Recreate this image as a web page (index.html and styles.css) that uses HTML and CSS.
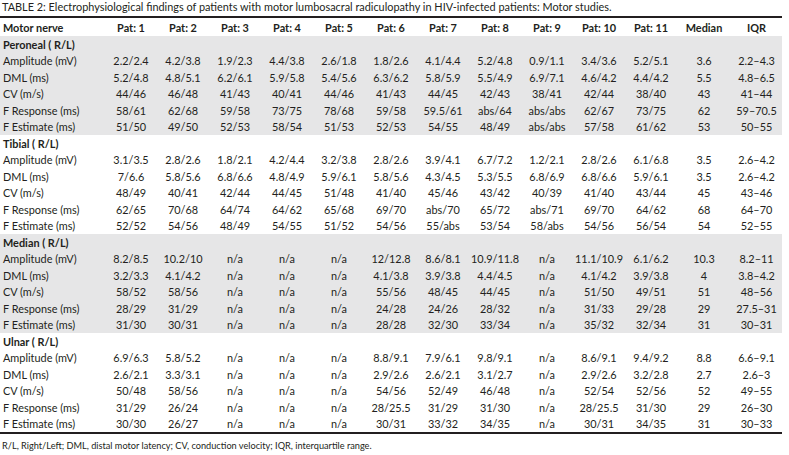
FILE: index.html
```html
<!DOCTYPE html>
<html>
<head>
<meta charset="utf-8">
<link rel="stylesheet" href="styles.css">
</head>
<body>
<div class="caption">TABLE 2: Electrophysiological findings of patients with motor lumbosacral radiculopathy in HIV-infected patients: Motor studies.</div>
<table class="data">
<colgroup>
<col class="c-name"><col class="c-pat"><col class="c-pat"><col class="c-pat"><col class="c-pat"><col class="c-pat"><col class="c-pat"><col class="c-pat"><col class="c-pat"><col class="c-pat"><col class="c-pat"><col class="c-pat"><col class="c-med"><col class="c-iqr">
</colgroup>
<thead>
<tr><th class="name">Motor nerve</th><th>Pat: 1</th><th>Pat: 2</th><th>Pat: 3</th><th>Pat: 4</th><th>Pat: 5</th><th>Pat: 6</th><th>Pat: 7</th><th>Pat: 8</th><th>Pat: 9</th><th>Pat: 10</th><th>Pat: 11</th><th>Median</th><th>IQR</th></tr>
</thead>
<tbody class="shade">
<tr><td class="sec" colspan="14">Peroneal ( R/L)</td></tr>
<tr><td class="name">Amplitude (mV)</td><td>2.2/2.4</td><td>4.2/3.8</td><td>1.9/2.3</td><td>4.4/3.8</td><td>2.6/1.8</td><td>1.8/2.6</td><td>4.1/4.4</td><td>5.2/4.8</td><td>0.9/1.1</td><td>3.4/3.6</td><td>5.2/5.1</td><td>3.6</td><td>2.2–4.3</td></tr>
<tr><td class="name">DML (ms)</td><td>5.2/4.8</td><td>4.8/5.1</td><td>6.2/6.1</td><td>5.9/5.8</td><td>5.4/5.6</td><td>6.3/6.2</td><td>5.8/5.9</td><td>5.5/4.9</td><td>6.9/7.1</td><td>4.6/4.2</td><td>4.4/4.2</td><td>5.5</td><td>4.8–6.5</td></tr>
<tr><td class="name">CV (m/s)</td><td>44/46</td><td>46/48</td><td>41/43</td><td>40/41</td><td>44/46</td><td>41/43</td><td>44/45</td><td>42/43</td><td>38/41</td><td>42/44</td><td>38/40</td><td>43</td><td>41–44</td></tr>
<tr><td class="name">F Response (ms)</td><td>58/61</td><td>62/68</td><td>59/58</td><td>73/75</td><td>78/68</td><td>59/58</td><td>59.5/61</td><td>abs/64</td><td>abs/abs</td><td>62/67</td><td>73/75</td><td>62</td><td>59–70.5</td></tr>
<tr><td class="name">F Estimate (ms)</td><td>51/50</td><td>49/50</td><td>52/53</td><td>58/54</td><td>51/53</td><td>52/53</td><td>54/55</td><td>48/49</td><td>abs/abs</td><td>57/58</td><td>61/62</td><td>53</td><td>50–55</td></tr>
</tbody>
<tbody>
<tr><td class="sec" colspan="14">Tibial ( R/L)</td></tr>
<tr><td class="name">Amplitude (mV)</td><td>3.1/3.5</td><td>2.8/2.6</td><td>1.8/2.1</td><td>4.2/4.4</td><td>3.2/3.8</td><td>2.8/2.6</td><td>3.9/4.1</td><td>6.7/7.2</td><td>1.2/2.1</td><td>2.8/2.6</td><td>6.1/6.8</td><td>3.5</td><td>2.6–4.2</td></tr>
<tr><td class="name">DML (ms)</td><td>7/6.6</td><td>5.8/5.6</td><td>6.8/6.6</td><td>4.8/4.9</td><td>5.9/6.1</td><td>5.8/5.6</td><td>4.3/4.5</td><td>5.3/5.5</td><td>6.8/6.9</td><td>6.8/6.6</td><td>5.9/6.1</td><td>3.5</td><td>2.6–4.2</td></tr>
<tr><td class="name">CV (m/s)</td><td>48/49</td><td>40/41</td><td>42/44</td><td>44/45</td><td>51/48</td><td>41/40</td><td>45/46</td><td>43/42</td><td>40/39</td><td>41/40</td><td>43/44</td><td>45</td><td>43–46</td></tr>
<tr><td class="name">F Response (ms)</td><td>62/65</td><td>70/68</td><td>64/74</td><td>64/62</td><td>65/68</td><td>69/70</td><td>abs/70</td><td>65/72</td><td>abs/71</td><td>69/70</td><td>64/62</td><td>68</td><td>64–70</td></tr>
<tr><td class="name">F Estimate (ms)</td><td>52/52</td><td>54/56</td><td>48/49</td><td>54/55</td><td>51/52</td><td>54/56</td><td>55/abs</td><td>53/54</td><td>58/abs</td><td>54/56</td><td>56/54</td><td>54</td><td>52–55</td></tr>
</tbody>
<tbody class="shade">
<tr><td class="sec" colspan="14">Median ( R/L)</td></tr>
<tr><td class="name">Amplitude (mV)</td><td>8.2/8.5</td><td>10.2/10</td><td>n/a</td><td>n/a</td><td>n/a</td><td>12/12.8</td><td>8.6/8.1</td><td>10.9/11.8</td><td>n/a</td><td>11.1/10.9</td><td>6.1/6.2</td><td>10.3</td><td>8.2–11</td></tr>
<tr><td class="name">DML (ms)</td><td>3.2/3.3</td><td>4.1/4.2</td><td>n/a</td><td>n/a</td><td>n/a</td><td>4.1/3.8</td><td>3.9/3.8</td><td>4.4/4.5</td><td>n/a</td><td>4.1/4.2</td><td>3.9/3.8</td><td>4</td><td>3.8–4.2</td></tr>
<tr><td class="name">CV (m/s)</td><td>58/52</td><td>58/56</td><td>n/a</td><td>n/a</td><td>n/a</td><td>55/56</td><td>48/45</td><td>44/45</td><td>n/a</td><td>51/50</td><td>49/51</td><td>51</td><td>48–56</td></tr>
<tr><td class="name">F Response (ms)</td><td>28/29</td><td>31/29</td><td>n/a</td><td>n/a</td><td>n/a</td><td>24/28</td><td>24/26</td><td>28/32</td><td>n/a</td><td>31/33</td><td>29/28</td><td>29</td><td>27.5–31</td></tr>
<tr><td class="name">F Estimate (ms)</td><td>31/30</td><td>30/31</td><td>n/a</td><td>n/a</td><td>n/a</td><td>28/28</td><td>32/30</td><td>33/34</td><td>n/a</td><td>35/32</td><td>32/34</td><td>31</td><td>30–31</td></tr>
</tbody>
<tbody>
<tr><td class="sec" colspan="14">Ulnar ( R/L)</td></tr>
<tr><td class="name">Amplitude (mV)</td><td>6.9/6.3</td><td>5.8/5.2</td><td>n/a</td><td>n/a</td><td>n/a</td><td>8.8/9.1</td><td>7.9/6.1</td><td>9.8/9.1</td><td>n/a</td><td>8.6/9.1</td><td>9.4/9.2</td><td>8.8</td><td>6.6–9.1</td></tr>
<tr><td class="name">DML (ms)</td><td>2.6/2.1</td><td>3.3/3.1</td><td>n/a</td><td>n/a</td><td>n/a</td><td>2.9/2.6</td><td>2.6/2.1</td><td>3.1/2.7</td><td>n/a</td><td>2.9/2.6</td><td>3.2/2.8</td><td>2.7</td><td>2.6–3</td></tr>
<tr><td class="name">CV (m/s)</td><td>50/48</td><td>58/56</td><td>n/a</td><td>n/a</td><td>n/a</td><td>54/56</td><td>52/49</td><td>46/48</td><td>n/a</td><td>52/54</td><td>52/56</td><td>52</td><td>49–55</td></tr>
<tr><td class="name">F Response (ms)</td><td>31/29</td><td>26/24</td><td>n/a</td><td>n/a</td><td>n/a</td><td>28/25.5</td><td>31/29</td><td>31/30</td><td>n/a</td><td>28/25.5</td><td>31/30</td><td>29</td><td>26–30</td></tr>
<tr><td class="name">F Estimate (ms)</td><td>30/30</td><td>26/27</td><td>n/a</td><td>n/a</td><td>n/a</td><td>30/31</td><td>33/32</td><td>34/35</td><td>n/a</td><td>30/31</td><td>34/35</td><td>31</td><td>30–33</td></tr>
</tbody>
</table>
<div class="note">R/L, Right/Left; DML, distal motor latency; CV, conduction velocity; IQR, interquartile range.</div>
</body>
</html>
```
FILE: styles.css
```css
html, body {
  margin: 0;
  padding: 0;
  background: #ffffff;
}
body {
  font-family: Lato, "Liberation Sans", sans-serif;
  font-size: 10.9px;
  color: #231f20;
}
.caption {
  height: 13px;
  line-height: 13px;
  padding-left: 2px;
  margin-bottom: 3px;
  white-space: nowrap;
}
.data {
  border-collapse: collapse;
  table-layout: fixed;
  width: 782px;
  border-top: 2px solid #231f20;
  border-bottom: 2px solid #231f20;
}
.c-name { width: 105px; }
.c-pat { width: 52px; }
.c-med { width: 54px; }
.c-iqr { width: 51px; }
.data th {
  height: 18px;
  padding: 0;
  font-weight: 700;
  text-align: center;
  white-space: nowrap;
}
.data td {
  height: 16.5px;
  padding: 0;
  text-align: center;
  white-space: nowrap;
}
.data .name, .data .sec {
  text-align: left;
  padding-left: 3px;
}
.data .sec {
  font-weight: 700;
}
.shade td {
  background: #e6e6e7;
}
.note {
  margin-top: 5px;
  padding-left: 2px;
  font-size: 9.2px;
  line-height: 13px;
}
```
